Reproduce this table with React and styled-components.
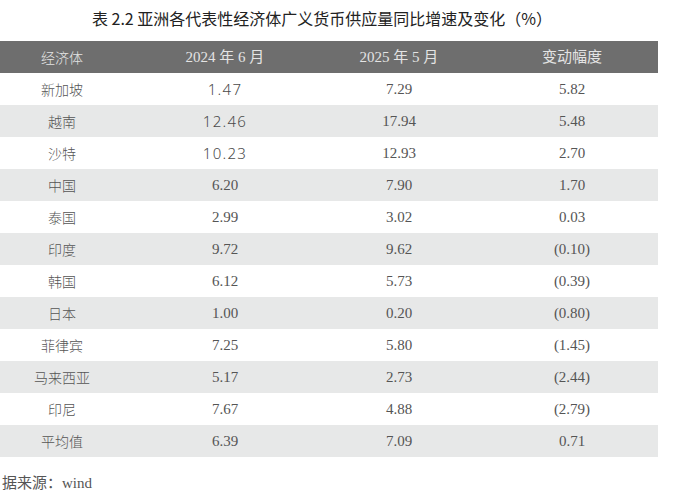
import React from 'react';
import styled, { createGlobalStyle } from 'styled-components';

const GlobalStyle = createGlobalStyle`
  body {
    margin: 0;
    background: #fff;
    font-family: "Liberation Serif", "Noto Sans CJK SC", serif;
  }
`;

const Page = styled.div`
  width: 681px;
  height: 494px;
  overflow: hidden;
`;

const Title = styled.h1`
  width: 644px;
  margin: 0;
  height: 41px;
  padding-top: 6px;
  box-sizing: border-box;
  text-align: center;
  font-family: "Noto Sans CJK SC", "Noto Sans", sans-serif;
  font-size: 16px;
  font-weight: 400;
  line-height: 24px;
  color: #222;
`;

const Table = styled.div`
  width: 658px;
`;

const Row = styled.div`
  display: grid;
  grid-template-columns: 124px 202px 146px 186px;
  height: 32px;
  align-items: center;
  background: ${(p) => (p.$head ? '#6e6e6e' : p.$shade ? '#e7e8e8' : '#fff')};
  color: ${(p) => (p.$head ? '#e4e4e4' : '#555')};
`;

const Cell = styled.div`
  text-align: center;
  font-size: 15px;
  line-height: 32px;
  white-space: nowrap;
  &:first-child {
    font-family: "Noto Sans CJK SC", sans-serif;
    font-size: 14px;
    font-weight: 300;
  }
  &:last-child {
    padding-left: 14px;
  }
`;

const SansNum = styled(Cell)`
  font-family: "Noto Sans", sans-serif;
  font-size: 15px;
  font-weight: 300;
  letter-spacing: 1.3px;
  color: #4a4a4a;
`;

const Source = styled.div`
  margin-top: 16px;
  padding-left: 2px;
  font-size: 15px;
  line-height: 20px;
  color: #555;
`;

const rows = [
  ['新加坡', '1.47', '7.29', '5.82'],
  ['越南', '12.46', '17.94', '5.48'],
  ['沙特', '10.23', '12.93', '2.70'],
  ['中国', '6.20', '7.90', '1.70'],
  ['泰国', '2.99', '3.02', '0.03'],
  ['印度', '9.72', '9.62', '(0.10)'],
  ['韩国', '6.12', '5.73', '(0.39)'],
  ['日本', '1.00', '0.20', '(0.80)'],
  ['菲律宾', '7.25', '5.80', '(1.45)'],
  ['马来西亚', '5.17', '2.73', '(2.44)'],
  ['印尼', '7.67', '4.88', '(2.79)'],
  ['平均值', '6.39', '7.09', '0.71'],
];

export default function App() {
  return (
    <Page>
      <GlobalStyle />
      <Title>表 2.2 亚洲各代表性经济体广义货币供应量同比增速及变化（%）</Title>
      <Table>
        <Row $head>
          <Cell>经济体</Cell>
          <Cell>2024 年 6 月</Cell>
          <Cell>2025 年 5 月</Cell>
          <Cell>变动幅度</Cell>
        </Row>
        {rows.map((r, i) => {
          const Second = i < 3 ? SansNum : Cell;
          return (
            <Row key={r[0]} $shade={i % 2 === 1}>
              <Cell>{r[0]}</Cell>
              <Second>{r[1]}</Second>
              <Cell>{r[2]}</Cell>
              <Cell>{r[3]}</Cell>
            </Row>
          );
        })}
      </Table>
      <Source>据来源：wind</Source>
    </Page>
  );
}
